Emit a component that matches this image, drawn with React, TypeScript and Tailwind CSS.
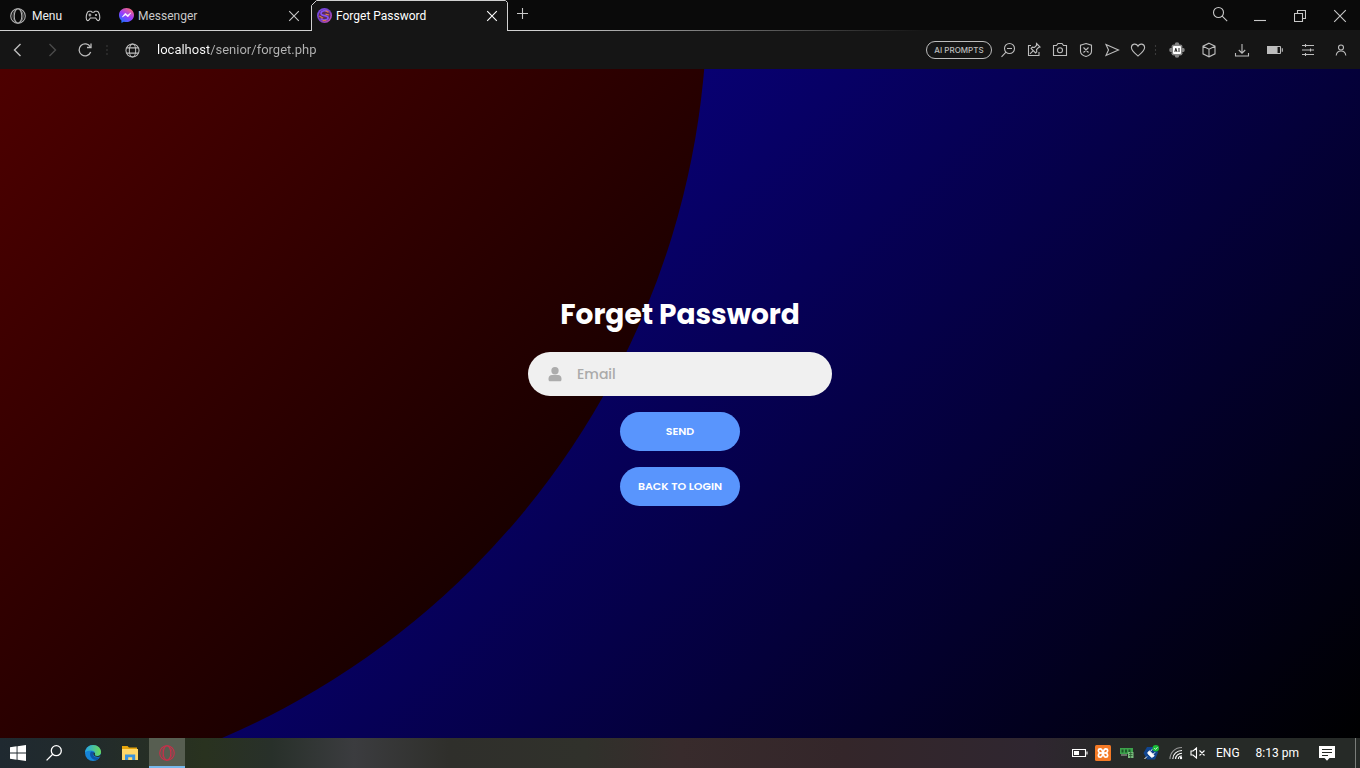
import type { ReactNode } from "react";

type GlyphProps = { children: ReactNode; className?: string; box?: string };

function Glyph({ children, className = "size-4", box = "0 0 16 16" }: GlyphProps) {
  return (
    <svg
      viewBox={box}
      className={"shrink-0 " + className}
      fill="none"
      stroke="currentColor"
      strokeWidth="1.1"
      aria-hidden="true"
    >
      {children}
    </svg>
  );
}

function IconButton({ label, className = "", children }: { label: string; className?: string; children: ReactNode }) {
  return (
    <button type="button" aria-label={label} className={"flex shrink-0 items-center justify-center " + className}>
      {children}
    </button>
  );
}

function OperaMark({ className }: { className: string }) {
  return (
    <Glyph className={className}>
      <circle cx="8" cy="8" r="7.3" />
      <ellipse cx="8" cy="8" rx="3.8" ry="7.2" />
      <path d="M9.5 1.2c2.6 1.8 3.6 4.2 3.6 6.8s-1 5-3.6 6.8" strokeWidth="0.7" />
      <path d="M6.5 1.2C3.9 3 2.9 5.4 2.9 8s1 5 3.6 6.8" strokeWidth="0.5" />
    </Glyph>
  );
}

function CloseMark() {
  return (
    <Glyph className="size-3" box="0 0 12 12">
      <path d="M1.2 1.2l9.6 9.6M10.8 1.2l-9.6 9.6" />
    </Glyph>
  );
}

function TabBar() {
  return (
    <header className="relative flex h-[31px] items-stretch bg-[#0a0a0a] text-xs text-[#c8c8c8]">
      <div className="absolute inset-x-0 bottom-0 h-px bg-linear-to-r from-[#d0d0d0] from-40% to-[#151515] to-68%" />
      <button type="button" className="flex w-[78px] items-center gap-[6px] pt-px pl-[10px] text-[#eeeeee]">
        <OperaMark className="size-4 text-[#b0b0b0]" />
        Menu
      </button>
      <IconButton label="Gaming corner" className="w-[30px]">
        <Glyph className="h-3 w-4" box="0 0 16 12">
          <path d="M4 1.2h2l1 1h2l1-1h2c1.500 0 2.800 3.200 2.800 6.200 0 3.600-2 4-3.300 1.800l-.8-1.200H5.300l-.8 1.200C3.200 11.400 1.200 11 1.200 7.400c0-3 1.300-6.200 2.800-6.200z" />
          <path d="M4.900 3.600v2.800M3.500 5h2.800" />
          <circle cx="11" cy="5" r="1.1" fill="currentColor" stroke="none" />
        </Glyph>
      </IconButton>
      <div className="flex w-[203px] items-center gap-1 pl-[11px]">
        <svg viewBox="0 0 16 16" className="size-[15px]" aria-hidden="true">
          <defs>
            <linearGradient id="messenger" x1="0.2" y1="1" x2="0.8" y2="0">
              <stop offset="0" stopColor="#1473ff" />
              <stop offset="0.5" stopColor="#9a3cff" />
              <stop offset="1" stopColor="#ff6a6f" />
            </linearGradient>
          </defs>
          <path d="M8 0C3.500 0 0 3.200 0 7.600c0 2.300 1 4.300 2.600 5.700V16l2.500-1.400c.9.300 1.900.4 2.900.4 4.500 0 8-3.200 8-7.500S12.500 0 8 0z" fill="url(#messenger)" />
          <path d="M3.500 9.600l3.100-4 2.700 2L12.600 5.200l-3 4.200-2.700-2z" fill="#fff" stroke="#fff" strokeWidth="0.6" />
        </svg>
        <a href="#messenger">Messenger</a>
        <IconButton label="Close Messenger" className="mr-[11px] ml-auto">
          <CloseMark />
        </IconButton>
      </div>
      <div className="relative flex w-[197px] items-center gap-1 pl-[6px] text-white">
        <svg viewBox="0 0 197 31" preserveAspectRatio="none" className="absolute inset-0 h-full w-full" aria-hidden="true">
          <path d="M0 31V5L5 0.500H196.500V31z" fill="#151515" />
          <path d="M0.500 31V5.500L5.500 0.500H194.500L196.500 2.500V31" fill="none" stroke="#d0d0d0" />
        </svg>
        <svg viewBox="0 0 16 16" className="relative size-[15px]" aria-hidden="true">
          <defs>
            <linearGradient id="favicon" x1="0" y1="0" x2="1" y2="1">
              <stop offset="0" stopColor="#7a4cf0" />
              <stop offset="0.55" stopColor="#7a3fc0" />
              <stop offset="1" stopColor="#dd50aa" />
            </linearGradient>
          </defs>
          <circle cx="8" cy="8" r="8" fill="url(#favicon)" />
          <circle cx="8" cy="8" r="6.2" fill="#5a2c58" />
          <path d="M12 4.200C8.500 1.500 3.500 3.500 4.500 6.500c.8 2.200 7 1.200 7.300 3.800.2 2.600-5 3.500-8 1" fill="none" stroke="#8452f5" strokeWidth="1.8" />
          <path d="M9 3l3.500 1.500M9 6.500l4 1M2.500 8.500l4 2.500M6 13.500l4-.5" stroke="#e07a48" strokeWidth="1.2" />
        </svg>
        <a href="#forget" className="relative">Forget Password</a>
        <IconButton label="Close Forget Password" className="relative mr-[10px] ml-auto">
          <CloseMark />
        </IconButton>
      </div>
      <IconButton label="New tab" className="w-[30px] pb-1">
        <Glyph className="size-3" box="0 0 12 12">
          <path d="M5.500 0v11M0 5.500h11" />
        </Glyph>
      </IconButton>
      <div className="ml-auto flex items-center">
        <IconButton label="Search tabs" className="w-10 pb-1">
          <Glyph>
            <circle cx="6.5" cy="6.5" r="5" />
            <path d="M10.200 10.200l5 5" />
          </Glyph>
        </IconButton>
        <IconButton label="Minimize" className="w-10">
          <Glyph className="size-3" box="0 0 12 12">
            <path d="M0 10.500h12" />
          </Glyph>
        </IconButton>
        <IconButton label="Restore" className="w-10">
          <Glyph className="size-3" box="0 0 12 12">
            <path d="M.500 3.500h8v8h-8zM3.500 3.500v-3h8v8h-3" />
          </Glyph>
        </IconButton>
        <IconButton label="Close window" className="w-10">
          <Glyph className="size-[14px]" box="0 0 14 14">
            <path d="M1.200 1.200l11.600 11.600M12.800 1.200L1.200 12.800" />
          </Glyph>
        </IconButton>
      </div>
    </header>
  );
}

function AddressBar() {
  return (
    <nav className="flex h-[38px] items-center bg-[#151515] text-[#bdbdbd]">
      <IconButton label="Back" className="w-9">
        <Glyph>
          <path d="M10.500 2L4.500 8l6 6" strokeWidth="1.4" />
        </Glyph>
      </IconButton>
      <IconButton label="Forward" className="w-[31px] text-[#4a4a4a]">
        <Glyph>
          <path d="M5.500 2L11.500 8l-6 6" strokeWidth="1.4" />
        </Glyph>
      </IconButton>
      <IconButton label="Reload" className="w-[35px]">
        <Glyph>
          <path d="M13.300 4.800A6 6 0 1 0 13.700 10" strokeWidth="1.3" />
          <path d="M14 1.500V5.500H10" strokeWidth="1.3" />
        </Glyph>
      </IconButton>
      <div className="w-[10px] text-[#3a3a3a]">
        <Glyph className="h-3 w-[10px]" box="0 0 10 12">
          <path d="M5 1v2M5 5v2M5 9v2" />
        </Glyph>
      </div>
      <IconButton label="Site information" className="w-10">
        <Glyph className="size-[15px]">
          <circle cx="8" cy="8" r="7" />
          <ellipse cx="8" cy="8" rx="3.4" ry="7" />
          <path d="M1.700 5.200h12.600M1.700 10.800h12.600" />
        </Glyph>
      </IconButton>
      <input
        type="text"
        aria-label="Address"
        defaultValue="localhost/senior/forget.php"
        className="ml-[5px] min-w-0 flex-1 bg-[linear-gradient(90deg,#ffffff_52px,#b4b4b4_52px)] bg-clip-text text-[13px] text-transparent caret-white outline-none"
      />
      <button type="button" className="h-[18px] w-[66px] shrink-0 rounded-full border border-[#bdbdbd] font-['Inter',sans-serif] text-[8px] font-medium">
        AI PROMPTS
      </button>
      <div className="ml-[3px] flex items-center">
        <IconButton label="Zoom out" className="w-[26px]">
          <Glyph>
            <circle cx="9.5" cy="6.5" r="5" />
            <path d="M6 10.200L1.500 14.800M7 6.500h5" />
          </Glyph>
        </IconButton>
        <IconButton label="Pinboard" className="w-[26px]">
          <Glyph>
            <path d="M5 3.500H2.500v10h10.500V10" />
            <path d="M10.500 1.500l3.500 3.500-1.500.5-2 2 .3 2.200-1.200 1.200-4.500-4.500 1.200-1.200 2.200.3 2-2zM7 8.800l-3 3" />
          </Glyph>
        </IconButton>
        <IconButton label="Snapshot" className="w-[26px]">
          <Glyph>
            <path d="M1.500 3.500h3l1.500-2h4l1.500 2h3v10h-13z" />
            <circle cx="8" cy="8.300" r="2.500" />
          </Glyph>
        </IconButton>
        <IconButton label="Tracker blocker" className="w-[26px]">
          <Glyph>
            <path d="M8 1.500l5.500 1.700v6c0 2.800-2.500 4.400-5.500 5.300-3-.9-5.500-2.500-5.500-5.300v-6zM5.500 5.500l5 5M10.500 5.500l-5 5" />
          </Glyph>
        </IconButton>
        <IconButton label="Send to My Flow" className="w-[26px]">
          <Glyph>
            <path d="M2 2.500L14.500 8 2 13.500 4.500 8z" />
          </Glyph>
        </IconButton>
        <IconButton label="Bookmark" className="w-[26px]">
          <Glyph>
            <path d="M8 14C5 11.500 1.400 8.800 1.400 5.500c0-4 5-4.500 6.600-1.300 1.600-3.200 6.600-2.700 6.600 1.300C14.600 8.800 11 11.500 8 14z" />
          </Glyph>
        </IconButton>
        <Glyph className="h-3 w-[13px] text-[#3a3a3a]" box="0 0 13 12">
          <path d="M4.500 1v2M4.500 5v2M4.500 9v2" />
        </Glyph>
        <IconButton label="AI assistant" className="w-[26px]">
          <Glyph>
            <g fill="#858585" stroke="none">
              <circle cx="8" cy="2.500" r="2.300" />
              <circle cx="8" cy="13.500" r="2.300" />
              <circle cx="2.500" cy="8" r="2.300" />
              <circle cx="13.500" cy="8" r="2.300" />
              <circle cx="4.800" cy="4.800" r="2.300" />
              <circle cx="11.200" cy="4.800" r="2.300" />
              <circle cx="4.800" cy="11.200" r="2.300" />
              <circle cx="11.200" cy="11.200" r="2.300" />
            </g>
            <rect x="4" y="4" width="8" height="8" rx="1" fill="#fff" stroke="none" />
            <path d="M5.800 9.800l1-3.500 1.200 3.500M6.300 8.800h1.400M10 6v4" stroke="#222" strokeWidth="1" />
          </Glyph>
        </IconButton>
        <IconButton label="Extensions" className="w-[38px]">
          <Glyph>
            <path d="M8 1.200l6 3v7.600l-6 3-6-3V4.200zM2 4.200l6 3 6-3M8 7.200v7.600" />
          </Glyph>
        </IconButton>
        <IconButton label="Downloads" className="w-7">
          <Glyph>
            <path d="M8 2v9M4.800 8L8 11.200 11.200 8M1.500 11v3h13v-3" />
          </Glyph>
        </IconButton>
        <IconButton label="Battery saver" className="w-[38px]">
          <Glyph className="h-3 w-4" box="0 0 16 12">
            <rect x="0.5" y="2.5" width="13" height="7" rx="0.5" />
            <path d="M0.500 2.500h9.500v7H.500z" fill="currentColor" />
            <path d="M15.300 4.200v3.600" />
          </Glyph>
        </IconButton>
        <IconButton label="Easy setup" className="w-7">
          <Glyph className="h-3 w-3" box="0 0 12 12">
            <path d="M0 1.500h12M0 6h12M0 10.500h12M3.500 0v3M8.500 4.500v3M3.500 9v3" />
          </Glyph>
        </IconButton>
        <IconButton label="Profile" className="w-[38px]">
          <Glyph className="size-3" box="0 0 12 12">
            <circle cx="6" cy="3.500" r="2.500" />
            <path d="M1.200 11.500C1.500 8.800 3.500 7 6 7s4.500 1.800 4.800 4.500" />
          </Glyph>
        </IconButton>
      </div>
    </nav>
  );
}

function ForgetPassword() {
  return (
    <main className="relative flex flex-1 flex-col items-center overflow-hidden bg-[linear-gradient(135deg,#0c00ae,#000000)] pt-[223px] font-['Poppins','Inter',sans-serif]">
      <div className="absolute top-[-10%] right-[48%] size-[1602px] -translate-y-1/2 rounded-full bg-[linear-gradient(135deg,#ac0000,#000000)]" />
      <form className="relative flex w-[304px] flex-col items-center" onSubmit={(event) => event.preventDefault()}>
        <h1 className="text-[28px] leading-[46px] font-bold whitespace-nowrap text-white">Forget Password</h1>
        <label className="mt-[14px] flex h-11 w-full items-center rounded-full bg-[#f0f0f0] pl-5 text-[#acacac]">
          <svg viewBox="0 0 14 16" className="h-[15px] w-[14px] shrink-0" fill="currentColor" aria-hidden="true">
            <circle cx="7" cy="4" r="3.900" />
            <path d="M3.700 8.600h6.600c2 0 3.600 1.600 3.600 3.600v1.500c0 .9-.6 1.600-1.500 1.600H1.600c-.9 0-1.500-.7-1.500-1.600v-1.500c0-2 1.600-3.600 3.600-3.600z" />
          </svg>
          <input
            type="email"
            aria-label="Email"
            placeholder="Email"
            className="ml-[15px] min-w-0 flex-1 bg-transparent text-[14px] font-medium text-[#333333] outline-none placeholder:text-[#aaaaaa]"
          />
        </label>
        <button type="submit" className="mt-4 h-[39px] w-[120px] rounded-full bg-[#5995fd] text-[11px] font-semibold text-white">
          SEND
        </button>
        <button type="button" className="mt-4 h-[39px] w-[120px] rounded-full bg-[#5995fd] text-[11px] font-semibold text-white">
          BACK TO LOGIN
        </button>
      </form>
    </main>
  );
}

function Taskbar() {
  return (
    <footer className="flex h-[30px] items-center bg-[linear-gradient(90deg,#1f2930_0%,#222b2b_7%,#29321f_15%,#28302a_20%,#3b3c3f_26%,#2f2f2b_33%,#30312b_43%,#382b2c_50%,#34262a_62%,#2f2630_76%,#262a27_83%,#262a27_100%)] text-xs text-white">
      <IconButton label="Start" className="h-full w-9">
        <svg viewBox="0 0 16 16" className="size-4" fill="#fff" aria-hidden="true">
          <path d="M0 2.200L6.600 1.300v6.300H0zM7.500 1.200L16 0v7.600H7.500zM0 8.400h6.600v6.300L0 13.800zM7.500 8.400H16V16l-8.500-1.200z" />
        </svg>
      </IconButton>
      <IconButton label="Search" className="h-full w-9">
        <Glyph>
          <circle cx="10.300" cy="5.700" r="5" strokeWidth="1.3" />
          <path d="M6.700 9.300L.600 15.400" strokeWidth="1.3" />
        </Glyph>
      </IconButton>
      <IconButton label="Microsoft Edge" className="h-full w-[42px]">
        <svg viewBox="0 0 16 16" className="size-4" aria-hidden="true">
          <defs>
            <linearGradient id="edge" x1="0" y1="0.3" x2="1" y2="0.3">
              <stop offset="0" stopColor="#25a4e8" />
              <stop offset="1" stopColor="#6cdb55" />
            </linearGradient>
          </defs>
          <circle cx="8" cy="8" r="8" fill="#1684d8" />
          <path d="M0 7.500C.5 3 4 0 8 0c4.600 0 8 3.300 8 7 0 2.600-2 4-4 4-1.600 0-2.600-.6-2.200-1.200.6-1.100.4-4.300-3.800-4.300C3.300 5.500 1 6.300 0 7.500z" fill="url(#edge)" />
          <path d="M6 6.500c-2.600 3.500.5 8.500 5.500 8.500A8 8 0 0 0 15 12c-3 1.300-7 .5-7-3 0-1 .4-1.700 1-2z" fill="#0d52a8" />
          <path d="M8.600 7.300c-1 2.800 1 4.700 4 4.700 1.400 0 2.600-.4 3.400-1.200V9c-.9 1.400-2.300 2-4 2-1.600 0-2.600-.6-2.200-1.200.5-.8.4-2-1.200-2.500z" fill="#24302c" />
        </svg>
      </IconButton>
      <IconButton label="File Explorer" className="h-full w-8">
        <svg viewBox="0 0 16 14" className="h-[14px] w-4" aria-hidden="true">
          <path d="M0 0h5.500L7 1.500h8V4H0z" fill="#e5a50c" />
          <path d="M0 3h16v11H0z" fill="#ffd869" />
          <path d="M3 8.500h10.200V14h-3v-2.800H6.200V14H3z" fill="#3b93dc" />
        </svg>
      </IconButton>
      <button type="button" aria-label="Opera GX" className="ml-[3px] flex h-full w-9 items-center justify-center border-b-2 border-[#76b9ed] bg-[#575e51] pt-[2px] text-[#c8304a]">
        <OperaMark className="size-4" />
      </button>
      <div className="ml-auto flex h-full items-center">
        <Glyph className="h-[10px] w-4" box="0 0 16 10">
          <path d="M.5 1.500h13v7H.500zM15 3.500v3" />
          <path d="M2 3h5v4H2z" fill="#fff" stroke="none" />
        </Glyph>
        <svg viewBox="0 0 16 16" className="ml-[7px] size-4" aria-hidden="true">
          <rect width="16" height="16" rx="1.500" fill="#f47a26" />
          <g fill="none" stroke="#fff" strokeWidth="1.7">
            <path d="M8 8C7.500 6 7.200 3.800 5.200 3.800 2.800 3.800 2.800 6.600 4.800 8 2.800 9.400 2.800 12.200 5.200 12.200 7.200 12.200 7.500 10 8 8z" />
            <path d="M8 8C8.500 6 8.800 3.800 10.800 3.800 13.200 3.800 13.200 6.600 11.200 8 13.200 9.400 13.200 12.200 10.800 12.200 8.800 12.200 8.500 10 8 8z" />
            <path d="M4.800 8h6.400" />
          </g>
        </svg>
        <svg viewBox="0 0 14 12" className="ml-[9px] h-3 w-[14px]" aria-hidden="true">
          <path d="M0 1h13v6H0z" fill="#3da34b" />
          <path d="M1.500 2.500h2v3h-2zM5 2.500h2v3H5zM8.500 2.500h2v3h-2z" fill="#1d5728" />
          <path d="M1 8h6" stroke="#a9b7a9" />
          <path d="M8 5h5.500v6H8z" fill="#7dbd80" />
          <path d="M9 6.500h3.500M9 8.500h3.500M10.700 5v6" stroke="#295c30" strokeWidth="0.8" />
        </svg>
        <svg viewBox="0 0 16 16" className="ml-[9px] size-4" aria-hidden="true">
          <path d="M4 2h8l3 5.500-3 7H4L.500 8z" fill="#10458f" />
          <path d="M1.500 14l2.500-2.500M4.800 8.500l3.700 3.700c1.200 0 2.300-.6 2.700-1.700L6.500 6c-1.100.4-1.700 1.300-1.700 2.500zM7.500 6L9.500 4.300M10.300 9L12 7.300" fill="#fff" stroke="#fff" strokeWidth="1" />
          <circle cx="12.800" cy="3.200" r="3.200" fill="#19bd36" />
          <path d="M11.300 3.200l1.200 1.200 2-2.200" fill="none" stroke="#fff" strokeWidth="0.8" />
        </svg>
        <Glyph className="ml-[10px] size-[14px]" box="0 0 14 14">
          <path d="M1 13C1 6.500 6 1.500 13 1.500" stroke="#9a9a9a" />
          <path d="M3.800 13C3.800 8 8 4.500 13 4.500M6.600 13c0-3.200 2.800-5.700 6.400-5.700M9.300 13c0-1.600 1.500-3 3.700-3" />
          <circle cx="12" cy="12" r="1.200" fill="#fff" stroke="none" />
        </Glyph>
        <Glyph className="ml-[7px] h-3 w-4" box="0 0 16 12">
          <path d="M1 4h2l3.500-3v10L3 8H1zM9.500 3.500l5 5M14.500 3.500l-5 5" />
        </Glyph>
        <span className="ml-[10px]">ENG</span>
        <span className="ml-4">8:13 pm</span>
        <IconButton label="Notifications" className="ml-5 h-full">
          <svg viewBox="0 0 16 16" className="size-4" aria-hidden="true">
            <path d="M0 1h16v12h-5.500L8 15.800 5.500 13H0z" fill="#fff" />
            <path d="M3 4.500h10M3 7.500h10M3 10.500h6" stroke="#252925" strokeWidth="1" />
          </svg>
        </IconButton>
        <div className="ml-5 h-full w-[5px] border-l border-[#7a7d7a]" />
      </div>
    </footer>
  );
}

export default function App() {
  return (
    <div className="flex min-h-screen flex-col font-['Segoe_UI','Roboto',sans-serif]">
      <TabBar />
      <AddressBar />
      <ForgetPassword />
      <Taskbar />
    </div>
  );
}
